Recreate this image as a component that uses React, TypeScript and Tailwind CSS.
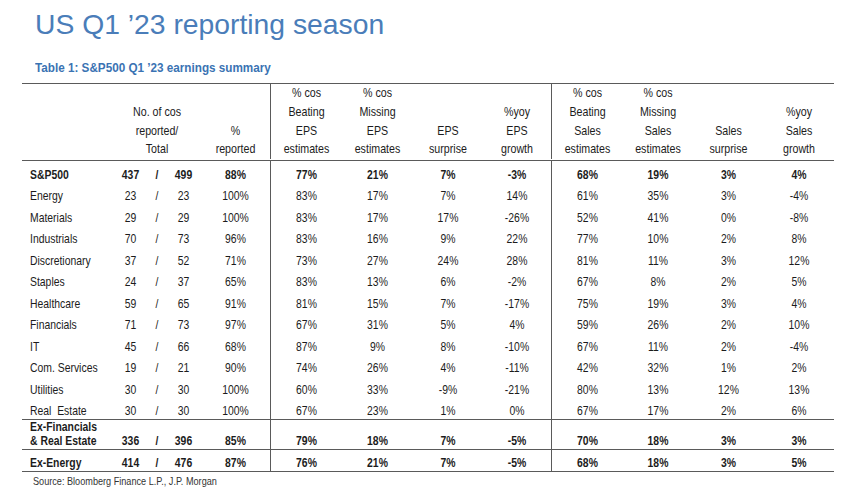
import React from "react";

type Row = { label: string[]; n: string; t: string; pct: string; v: string[]; bold?: boolean };

const rows: Row[] = [
  { label: ["S&P500"], n: "437", t: "499", pct: "88%", v: ["77%", "21%", "7%", "-3%", "68%", "19%", "3%", "4%"], bold: true },
  { label: ["Energy"], n: "23", t: "23", pct: "100%", v: ["83%", "17%", "7%", "14%", "61%", "35%", "3%", "-4%"] },
  { label: ["Materials"], n: "29", t: "29", pct: "100%", v: ["83%", "17%", "17%", "-26%", "52%", "41%", "0%", "-8%"] },
  { label: ["Industrials"], n: "70", t: "73", pct: "96%", v: ["83%", "16%", "9%", "22%", "77%", "10%", "2%", "8%"] },
  { label: ["Discretionary"], n: "37", t: "52", pct: "71%", v: ["73%", "27%", "24%", "28%", "81%", "11%", "3%", "12%"] },
  { label: ["Staples"], n: "24", t: "37", pct: "65%", v: ["83%", "13%", "6%", "-2%", "67%", "8%", "2%", "5%"] },
  { label: ["Healthcare"], n: "59", t: "65", pct: "91%", v: ["81%", "15%", "7%", "-17%", "75%", "19%", "3%", "4%"] },
  { label: ["Financials"], n: "71", t: "73", pct: "97%", v: ["67%", "31%", "5%", "4%", "59%", "26%", "2%", "10%"] },
  { label: ["IT"], n: "45", t: "66", pct: "68%", v: ["87%", "9%", "8%", "-10%", "67%", "11%", "2%", "-4%"] },
  { label: ["Com. Services"], n: "19", t: "21", pct: "90%", v: ["74%", "26%", "4%", "-11%", "42%", "32%", "1%", "2%"] },
  { label: ["Utilities"], n: "30", t: "30", pct: "100%", v: ["60%", "33%", "-9%", "-21%", "80%", "13%", "12%", "13%"] },
  { label: ["Real\u00a0 Estate"], n: "30", t: "30", pct: "100%", v: ["67%", "23%", "1%", "0%", "67%", "17%", "2%", "6%"] },
];

const exFin: Row = { label: ["Ex-Financials", "& Real Estate"], n: "336", t: "396", pct: "85%", v: ["79%", "18%", "7%", "-5%", "70%", "18%", "3%", "3%"], bold: true };
const exEn: Row = { label: ["Ex-Energy"], n: "414", t: "476", pct: "87%", v: ["76%", "21%", "7%", "-5%", "68%", "18%", "3%", "5%"], bold: true };

const grid = "grid grid-cols-[91px_35px_18px_35px_70px_71px_71px_70px_69px_71px_70px_71px_70px]";

function Cell({ children, className = "", left }: { children: React.ReactNode; className?: string; left?: boolean }) {
  return (
    <div className={`flex flex-col justify-end pb-[1px] ${left ? "text-left pl-[8px]" : "text-center"} ${className}`}>
      <div className={`whitespace-pre scale-x-[0.8] ${left ? "origin-left" : "origin-center"}`}>{children}</div>
    </div>
  );
}

function DataRow({ r, h, border }: { r: Row; h: string; border?: string }) {
  const w = r.bold ? "font-bold" : "";
  return (
    <div className={`${grid} ${h} ${border ?? ""} ${w} leading-[14px]`}>
      <Cell left>
        {r.label.map((l, i) => (
          <div key={i}>{l}</div>
        ))}
      </Cell>
      <Cell>{r.n}</Cell>
      <Cell>/</Cell>
      <Cell>{r.t}</Cell>
      <Cell className="border-r border-[#5a5a5a]">{r.pct}</Cell>
      {r.v.map((x, i) => (
        <Cell key={i} className={i === 3 ? "border-r border-[#5a5a5a]" : ""}>
          {x}
        </Cell>
      ))}
    </div>
  );
}

function H({ lines, className = "" }: { lines: string[]; className?: string }) {
  return (
    <div className={`flex flex-col justify-end text-center ${className}`}>
      <div className="scale-x-[0.82]">
        {lines.map((l, i) => (
          <div key={i}>{l}</div>
        ))}
      </div>
    </div>
  );
}

export default function App() {
  return (
    <div className="w-[846px] h-[487px] bg-white overflow-hidden font-['Liberation_Sans',Arial,sans-serif] text-[#1c1c1c]">
      <div className="pt-[10px] pl-[35px] h-[38px] text-[28.3px] leading-[28px] text-[#4a7db9]">
        US Q1 ’23 reporting season
      </div>
      <div className="mt-[22px] pl-[35px] text-[13px] leading-[15px] font-bold text-[#3a73b3]">
        <div className="scale-x-[0.9] origin-left whitespace-pre">Table 1: S&amp;P500 Q1 ’23 earnings summary</div>
      </div>
      <div className="mt-[8px] ml-[22px] w-[812px] text-[13px]">
        <div className={`${grid} h-[78px] border-y border-[#5a5a5a] leading-[18.7px] pb-[1px]`}>
          <div />
          <H className="col-span-3" lines={["No. of cos", "reported/", "Total"]} />
          <H className="border-r border-[#5a5a5a]" lines={["%", "reported"]} />
          <H lines={["% cos", "Beating", "EPS", "estimates"]} />
          <H lines={["% cos", "Missing", "EPS", "estimates"]} />
          <H lines={["EPS", "surprise"]} />
          <H className="border-r border-[#5a5a5a]" lines={["%yoy", "EPS", "growth"]} />
          <H lines={["% cos", "Beating", "Sales", "estimates"]} />
          <H lines={["% cos", "Missing", "Sales", "estimates"]} />
          <H lines={["Sales", "surprise"]} />
          <H lines={["%yoy", "Sales", "growth"]} />
        </div>
        {rows.map((r, i) => (
          <DataRow key={i} r={r} h="h-[21.5px]" />
        ))}
        <DataRow r={exFin} h="h-[29.5px]" border="border-t border-[#5a5a5a]" />
        <DataRow r={exEn} h="h-[23px]" border="border-y border-[#5a5a5a]" />
      </div>
      <div className="pl-[33px] pt-[3px] text-[11px] leading-[12px] text-[#333]">
        <div className="scale-x-[0.83] origin-left whitespace-pre">Source: Bloomberg Finance L.P., J.P. Morgan</div>
      </div>
    </div>
  );
}
